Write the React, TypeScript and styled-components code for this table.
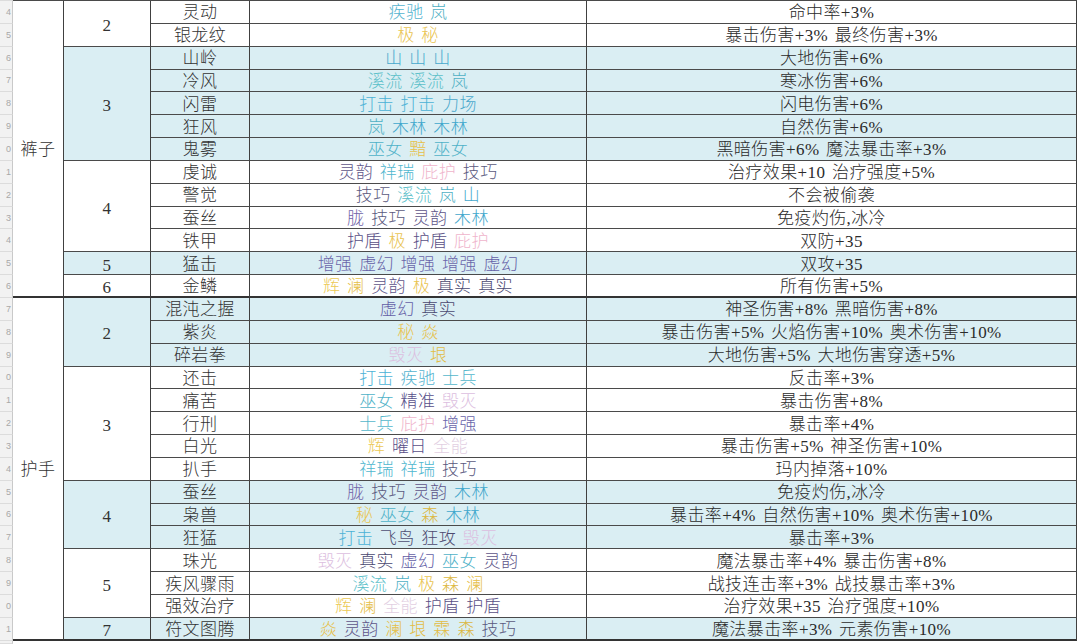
import React from "react";
import styled, { createGlobalStyle } from "styled-components";

const Global = createGlobalStyle`
  html, body { margin: 0; padding: 0; background: #ffffff; }
  body { font-family: "Liberation Serif", "Noto Sans CJK SC", serif; }
  #root { width: 1080px; height: 644px; }
`;

type Row = { name: string; runes: string[]; effect: string };
type Group = { level: number; blue: boolean; rows: Row[] };
type Category = { name: string; groups: Group[] };

const r = (name: string, runes: string, effect: string): Row => ({
  name,
  runes: runes.split(" "),
  effect,
});

const DATA: Category[] = [
  {
    name: "裤子",
    groups: [
      {
        level: 2,
        blue: false,
        rows: [
          r("灵动", "疾驰 岚", "命中率+3%"),
          r("银龙纹", "极 秘", "暴击伤害+3% 最终伤害+3%"),
        ],
      },
      {
        level: 3,
        blue: true,
        rows: [
          r("山岭", "山 山 山", "大地伤害+6%"),
          r("冷风", "溪流 溪流 岚", "寒冰伤害+6%"),
          r("闪雷", "打击 打击 力场", "闪电伤害+6%"),
          r("狂风", "岚 木林 木林", "自然伤害+6%"),
          r("鬼雾", "巫女 黯 巫女", "黑暗伤害+6% 魔法暴击率+3%"),
        ],
      },
      {
        level: 4,
        blue: false,
        rows: [
          r("虔诚", "灵韵 祥瑞 庇护 技巧", "治疗效果+10 治疗强度+5%"),
          r("警觉", "技巧 溪流 岚 山", "不会被偷袭"),
          r("蚕丝", "胧 技巧 灵韵 木林", "免疫灼伤,冰冷"),
          r("铁甲", "护盾 极 护盾 庇护", "双防+35"),
        ],
      },
      {
        level: 5,
        blue: true,
        rows: [r("猛击", "增强 虚幻 增强 增强 虚幻", "双攻+35")],
      },
      {
        level: 6,
        blue: false,
        rows: [r("金鳞", "辉 澜 灵韵 极 真实 真实", "所有伤害+5%")],
      },
    ],
  },
  {
    name: "护手",
    groups: [
      {
        level: 2,
        blue: true,
        rows: [
          r("混沌之握", "虚幻 真实", "神圣伤害+8% 黑暗伤害+8%"),
          r("紫炎", "秘 焱", "暴击伤害+5% 火焰伤害+10% 奥术伤害+10%"),
          r("碎岩拳", "毁灭 垠", "大地伤害+5% 大地伤害穿透+5%"),
        ],
      },
      {
        level: 3,
        blue: false,
        rows: [
          r("还击", "打击 疾驰 士兵", "反击率+3%"),
          r("痛苦", "巫女 精准 毁灭", "暴击伤害+8%"),
          r("行刑", "士兵 庇护 增强", "暴击率+4%"),
          r("白光", "辉 曜日 全能", "暴击伤害+5% 神圣伤害+10%"),
          r("扒手", "祥瑞 祥瑞 技巧", "玛内掉落+10%"),
        ],
      },
      {
        level: 4,
        blue: true,
        rows: [
          r("蚕丝", "胧 技巧 灵韵 木林", "免疫灼伤,冰冷"),
          r("枭兽", "秘 巫女 森 木林", "暴击率+4% 自然伤害+10% 奥术伤害+10%"),
          r("狂猛", "打击 飞鸟 狂攻 毁灭", "暴击率+3%"),
        ],
      },
      {
        level: 5,
        blue: false,
        rows: [
          r("珠光", "毁灭 真实 虚幻 巫女 灵韵", "魔法暴击率+4% 暴击伤害+8%"),
          r("疾风骤雨", "溪流 岚 极 森 澜", "战技连击率+3% 战技暴击率+3%"),
          r("强效治疗", "辉 澜 全能 护盾 护盾", "治疗效果+35 治疗强度+10%"),
        ],
      },
      {
        level: 7,
        blue: true,
        rows: [r("符文图腾", "焱 灵韵 澜 垠 霖 森 技巧", "魔法暴击率+3% 元素伤害+10%")],
      },
    ],
  },
];

const RUNE_COLORS: Record<string, string> = {
  疾驰: "#55b4d0",
  岚: "#4fb0c4",
  山: "#47a9cd",
  溪流: "#5cc0c9",
  打击: "#4cb2d6",
  力场: "#4aa8cc",
  木林: "#3fa7cc",
  巫女: "#4fb2c8",
  祥瑞: "#50b7cf",
  士兵: "#55b7cc",
  飞鸟: "#4f4e74",
  灵韵: "#5e5589",
  技巧: "#5b5a80",
  胧: "#7063a8",
  护盾: "#5a4f86",
  增强: "#6a66aa",
  虚幻: "#6460a6",
  真实: "#4a4870",
  精准: "#57508a",
  曜日: "#5a4f88",
  狂攻: "#4d4a70",
  庇护: "#efb5cc",
  毁灭: "#dcbee0",
  全能: "#e2cfe2",
  极: "#e9c451",
  秘: "#e9c451",
  黯: "#e6c04a",
  辉: "#ecc956",
  澜: "#e6c04a",
  焱: "#e6c04a",
  垠: "#e2bc45",
  森: "#dcb740",
  霖: "#e2bc45",
};

const LINE = "#4a4a4a";
const BLUE = "#daeef3";
const ROW_H = 22.857;

const Sheet = styled.div`
  width: 1080px;
  height: 644px;
  overflow: hidden;
  background: #ffffff;
  display: grid;
  grid-template-columns: 13px 51px 87px 99px 337px 490px 3px;
  grid-template-rows: 1px repeat(28, ${ROW_H}px) 1fr;
`;

const TopRule = styled.div`
  grid-row: 1;
  grid-column: 2 / 7;
  background: ${LINE};
`;

const HeaderCell = styled.div<{ $row: number }>`
  grid-row: ${(p) => p.$row};
  grid-column: 1;
  box-sizing: border-box;
  background: #f2f2f2;
  border-right: 1px solid #c9c9c9;
  border-bottom: 1px solid #dcdcdc;
  display: flex;
  align-items: center;
  justify-content: flex-end;
  padding-right: 1px;
  font-family: "Liberation Sans", sans-serif;
  font-size: 9px;
  line-height: 10px;
  color: #a8a8a8;
`;

const Cell = styled.div<{ $row: number; $span?: number; $blue?: boolean; $thick?: boolean }>`
  grid-row: ${(p) => p.$row} / span ${(p) => p.$span ?? 1};
  box-sizing: border-box;
  display: flex;
  align-items: center;
  justify-content: center;
  padding-top: 3px;
  white-space: nowrap;
  overflow: hidden;
  background: ${(p) => (p.$blue ? BLUE : "#ffffff")};
  border-right: 1px solid #404040;
  border-bottom: ${(p) => (p.$thick ? "2px solid #333333" : `1px solid ${LINE}`)};
  font-size: 17px;
  line-height: 20px;
  font-weight: 300;
  letter-spacing: 0.4px;
`;

const CategoryCell = styled(Cell)`
  grid-column: 2;
  color: #333333;
`;

const LevelCell = styled(Cell)`
  grid-column: 3;
  color: #333333;
  padding-top: 5px;
  font-weight: 400;
`;

const NameCell = styled(Cell)`
  grid-column: 4;
  color: #333333;
`;

const RuneCell = styled(Cell)`
  grid-column: 5;
`;

const RuneLine = styled.span`
  white-space: pre;
  word-spacing: 2px;
`;

const EffectCell = styled(Cell)`
  grid-column: 6;
  color: #2b2b2b;
`;

const EffectLine = styled.span`
  white-space: pre;
  word-spacing: 2px;
`;

const Rune = styled.span<{ $color: string }>`
  color: ${(p) => p.$color};
`;

const Runes: React.FC<{ list: string[] }> = ({ list }) => (
  <RuneLine>
    {list.map((w, i) => (
      <React.Fragment key={i}>
        {i > 0 ? " " : null}
        <Rune $color={RUNE_COLORS[w] ?? "#555"}>{w}</Rune>
      </React.Fragment>
    ))}
  </RuneLine>
);

export default function App() {
  const cells: React.ReactNode[] = [];
  let row = 2;
  DATA.forEach((cat, ci) => {
    const catRows = cat.groups.reduce((n, g) => n + g.rows.length, 0);
    cells.push(
      <CategoryCell key={`c${ci}`} $row={row} $span={catRows} $thick>
        {cat.name}
      </CategoryCell>
    );
    let gr = row;
    cat.groups.forEach((g, gi) => {
      const lastGroup = gi === cat.groups.length - 1;
      cells.push(
        <LevelCell
          key={`l${ci}-${gi}`}
          $row={gr}
          $span={g.rows.length}
          $blue={g.blue}
          $thick={lastGroup}
        >
          {g.level}
        </LevelCell>
      );
      g.rows.forEach((rw, ri) => {
        const thick = lastGroup && ri === g.rows.length - 1;
        const rr = gr + ri;
        cells.push(
          <NameCell key={`n${rr}`} $row={rr} $blue={g.blue} $thick={thick}>
            {rw.name}
          </NameCell>,
          <RuneCell key={`r${rr}`} $row={rr} $blue={g.blue} $thick={thick}>
            <Runes list={rw.runes} />
          </RuneCell>,
          <EffectCell key={`e${rr}`} $row={rr} $blue={g.blue} $thick={thick}>
            <EffectLine>{rw.effect}</EffectLine>
          </EffectCell>
        );
      });
      gr += g.rows.length;
    });
    row += catRows;
  });

  const headers = Array.from({ length: 30 }, (_, i) => (
    <HeaderCell key={`h${i}`} $row={i + 1}>
      {i > 0 && i < 29 ? (i + 3) % 10 : null}
    </HeaderCell>
  ));

  return (
    <>
      <Global />
      <Sheet>
        {headers}
        <TopRule />
        {cells}
      </Sheet>
    </>
  );
}
